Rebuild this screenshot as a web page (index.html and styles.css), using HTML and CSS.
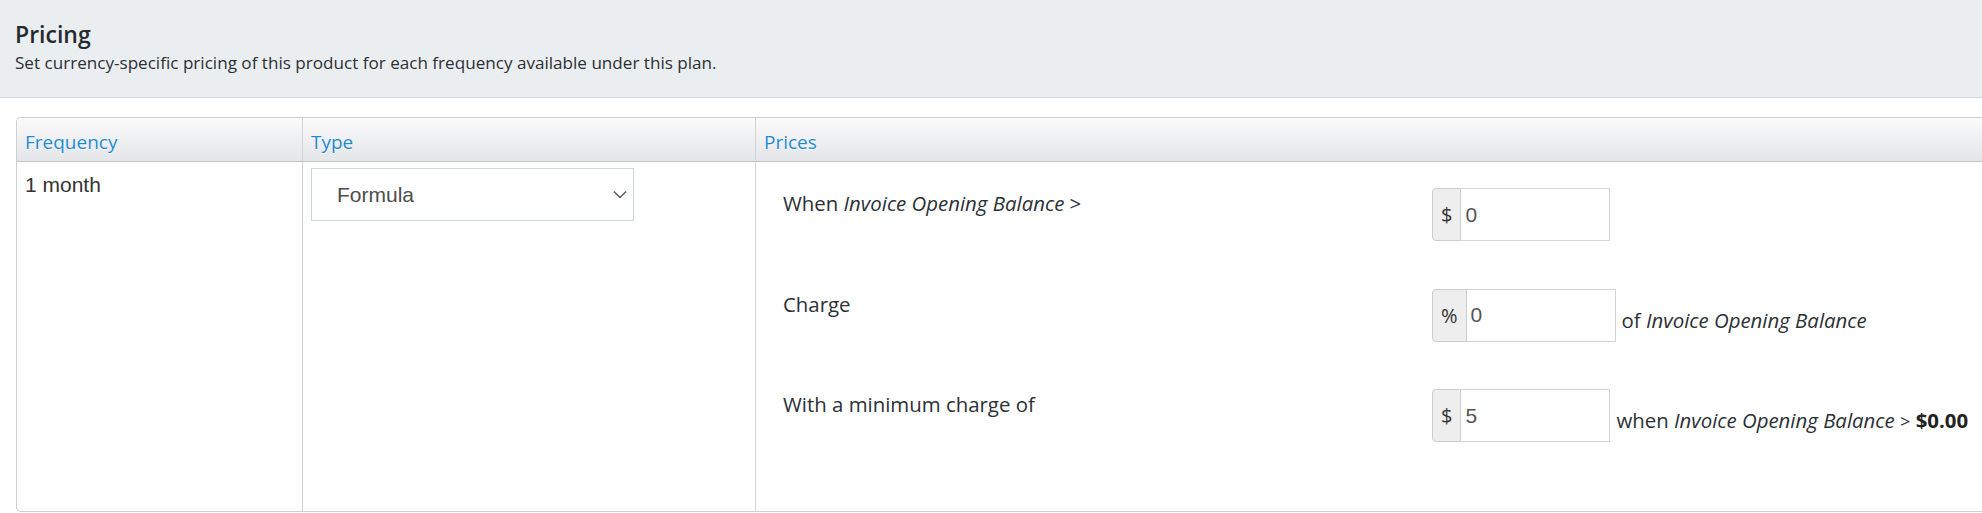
FILE: index.html
```html
<!DOCTYPE html>
<html lang="en">
<head>
<meta charset="utf-8">
<title>Pricing</title>
<link rel="stylesheet" href="styles.css">
</head>
<body>
<section class="band">
  <h2 class="band-title">Pricing</h2>
  <p class="band-sub">Set currency-specific pricing of this product for each frequency available under this plan.</p>
</section>

<div class="ptable">
  <div class="th">Frequency</div>
  <div class="th col-sep">Type</div>
  <div class="th col-sep">Prices</div>

  <div class="td">
    <span class="freq">1 month</span>
  </div>
  <div class="td col-sep">
    <div class="select">
      <span class="select-value">Formula</span>
      <svg class="chevron" width="14" height="9" viewBox="0 0 14 9" aria-hidden="true"><polyline points="1,1.5 7,7.5 13,1.5" fill="none" stroke="#555" stroke-width="1.4"/></svg>
    </div>
  </div>
  <div class="td col-sep">
    <div class="formula">
      <div class="frow">
        <div class="flabel">When <i>Invoice Opening Balance</i> &gt;</div>
        <div class="igroup"><span class="addon">$</span><span class="ifield">0</span></div>
        <div class="fsuffix"></div>
      </div>
      <div class="frow">
        <div class="flabel">Charge</div>
        <div class="igroup"><span class="addon">%</span><span class="ifield">0</span></div>
        <div class="fsuffix">of <i>Invoice Opening Balance</i></div>
      </div>
      <div class="frow">
        <div class="flabel">With a minimum charge of</div>
        <div class="igroup"><span class="addon">$</span><span class="ifield">5</span></div>
        <div class="fsuffix">when <i>Invoice Opening Balance</i> <span class="gt">&gt;</span> <b>$0.00</b></div>
      </div>
    </div>
  </div>
</div>
</body>
</html>
```

FILE: styles.css
```css
html, body {
  margin: 0;
  padding: 0;
}

body {
  width: 1982px;
  height: 513px;
  overflow: hidden;
  background: #ffffff;
  color: #333333;
  font-family: "Open Sans", "Noto Sans", sans-serif;
}

/* ---------- header band ---------- */
.band {
  box-sizing: border-box;
  height: 98px;
  padding: 20px 15px 0;
  background: #ebeef1;
  border-bottom: 1px solid #d6dadf;
}

.band-title {
  margin: 0;
  font-size: 23px;
  line-height: 28px;
  font-weight: 600;
  color: #252a2e;
}

.band-sub {
  margin: 3px 0 0;
  font-size: 17.1px;
  line-height: 24px;
  color: #2b3035;
}

/* ---------- pricing table ---------- */
.ptable {
  box-sizing: border-box;
  display: grid;
  grid-template-columns: 285px 453px 1fr;
  grid-template-rows: 44px 349px;
  width: 1966px;
  margin: 19px 0 0 16px;
  border: 1px solid #cfcfcf;
  border-right: 0;
  border-radius: 5px 0 0 5px;
  overflow: hidden;
}

.col-sep {
  border-left: 1px solid #d3d3d3;
}

.th {
  box-sizing: border-box;
  padding: 11px 8px 0;
  font-size: 19px;
  line-height: 26px;
  color: #1f8ad3;
  text-shadow: 0 1px 0 #ffffff;
  background: linear-gradient(to bottom, #fbfbfc 0%, #e4e5e8 100%);
  border-bottom: 1px solid #c3c4c6;
}

.td {
  box-sizing: border-box;
  padding: 6px 8px;
  min-width: 0;
}

.freq {
  display: block;
  font-family: "Liberation Sans", Arial, sans-serif;
  font-size: 21px;
  line-height: 33px;
  color: #333333;
}

/* select */
.select {
  box-sizing: border-box;
  width: 323px;
  height: 53px;
  padding: 1px 6px 0 25px;
  display: flex;
  align-items: center;
  justify-content: space-between;
  border: 1px solid #cdd4da;
  background: #ffffff;
}

.select-value {
  font-family: "Liberation Sans", Arial, sans-serif;
  font-size: 21px;
  color: #4d4d4d;
}

.chevron {
  display: block;
  margin-top: -2px;
}

/* formula rows */
.formula {
  padding: 20px 0 0 19px;
}

.frow {
  display: grid;
  grid-template-columns: 649px auto 1fr;
  align-items: start;
  height: 100.5px;
}

.flabel {
  padding-top: 1px;
  font-size: 20.4px;
  line-height: 28px;
  color: #2b3035;
  white-space: nowrap;
}

.flabel i,
.fsuffix i {
  font-style: italic;
}

.igroup {
  display: flex;
  height: 53px;
}

.addon {
  box-sizing: border-box;
  height: 53px;
  padding: 0 8px;
  display: flex;
  align-items: center;
  font-size: 20px;
  color: #333333;
  background: #eeeeee;
  border: 1px solid #cccccc;
  border-radius: 4px 0 0 4px;
}

.ifield {
  box-sizing: border-box;
  width: 149px;
  height: 53px;
  padding: 0 4px;
  display: flex;
  align-items: center;
  font-family: "Liberation Sans", Arial, sans-serif;
  font-size: 21px;
  color: #555555;
  background: #ffffff;
  border: 1px solid #cfd5da;
  border-left: 0;
}

.fsuffix {
  margin: 17px 0 0 6px;
  font-size: 20.4px;
  line-height: 28px;
  color: #2b3035;
  white-space: nowrap;
}

.fsuffix b {
  font-weight: 700;
  color: #222222;
}

.gt {
  font-size: 18px;
}
```
